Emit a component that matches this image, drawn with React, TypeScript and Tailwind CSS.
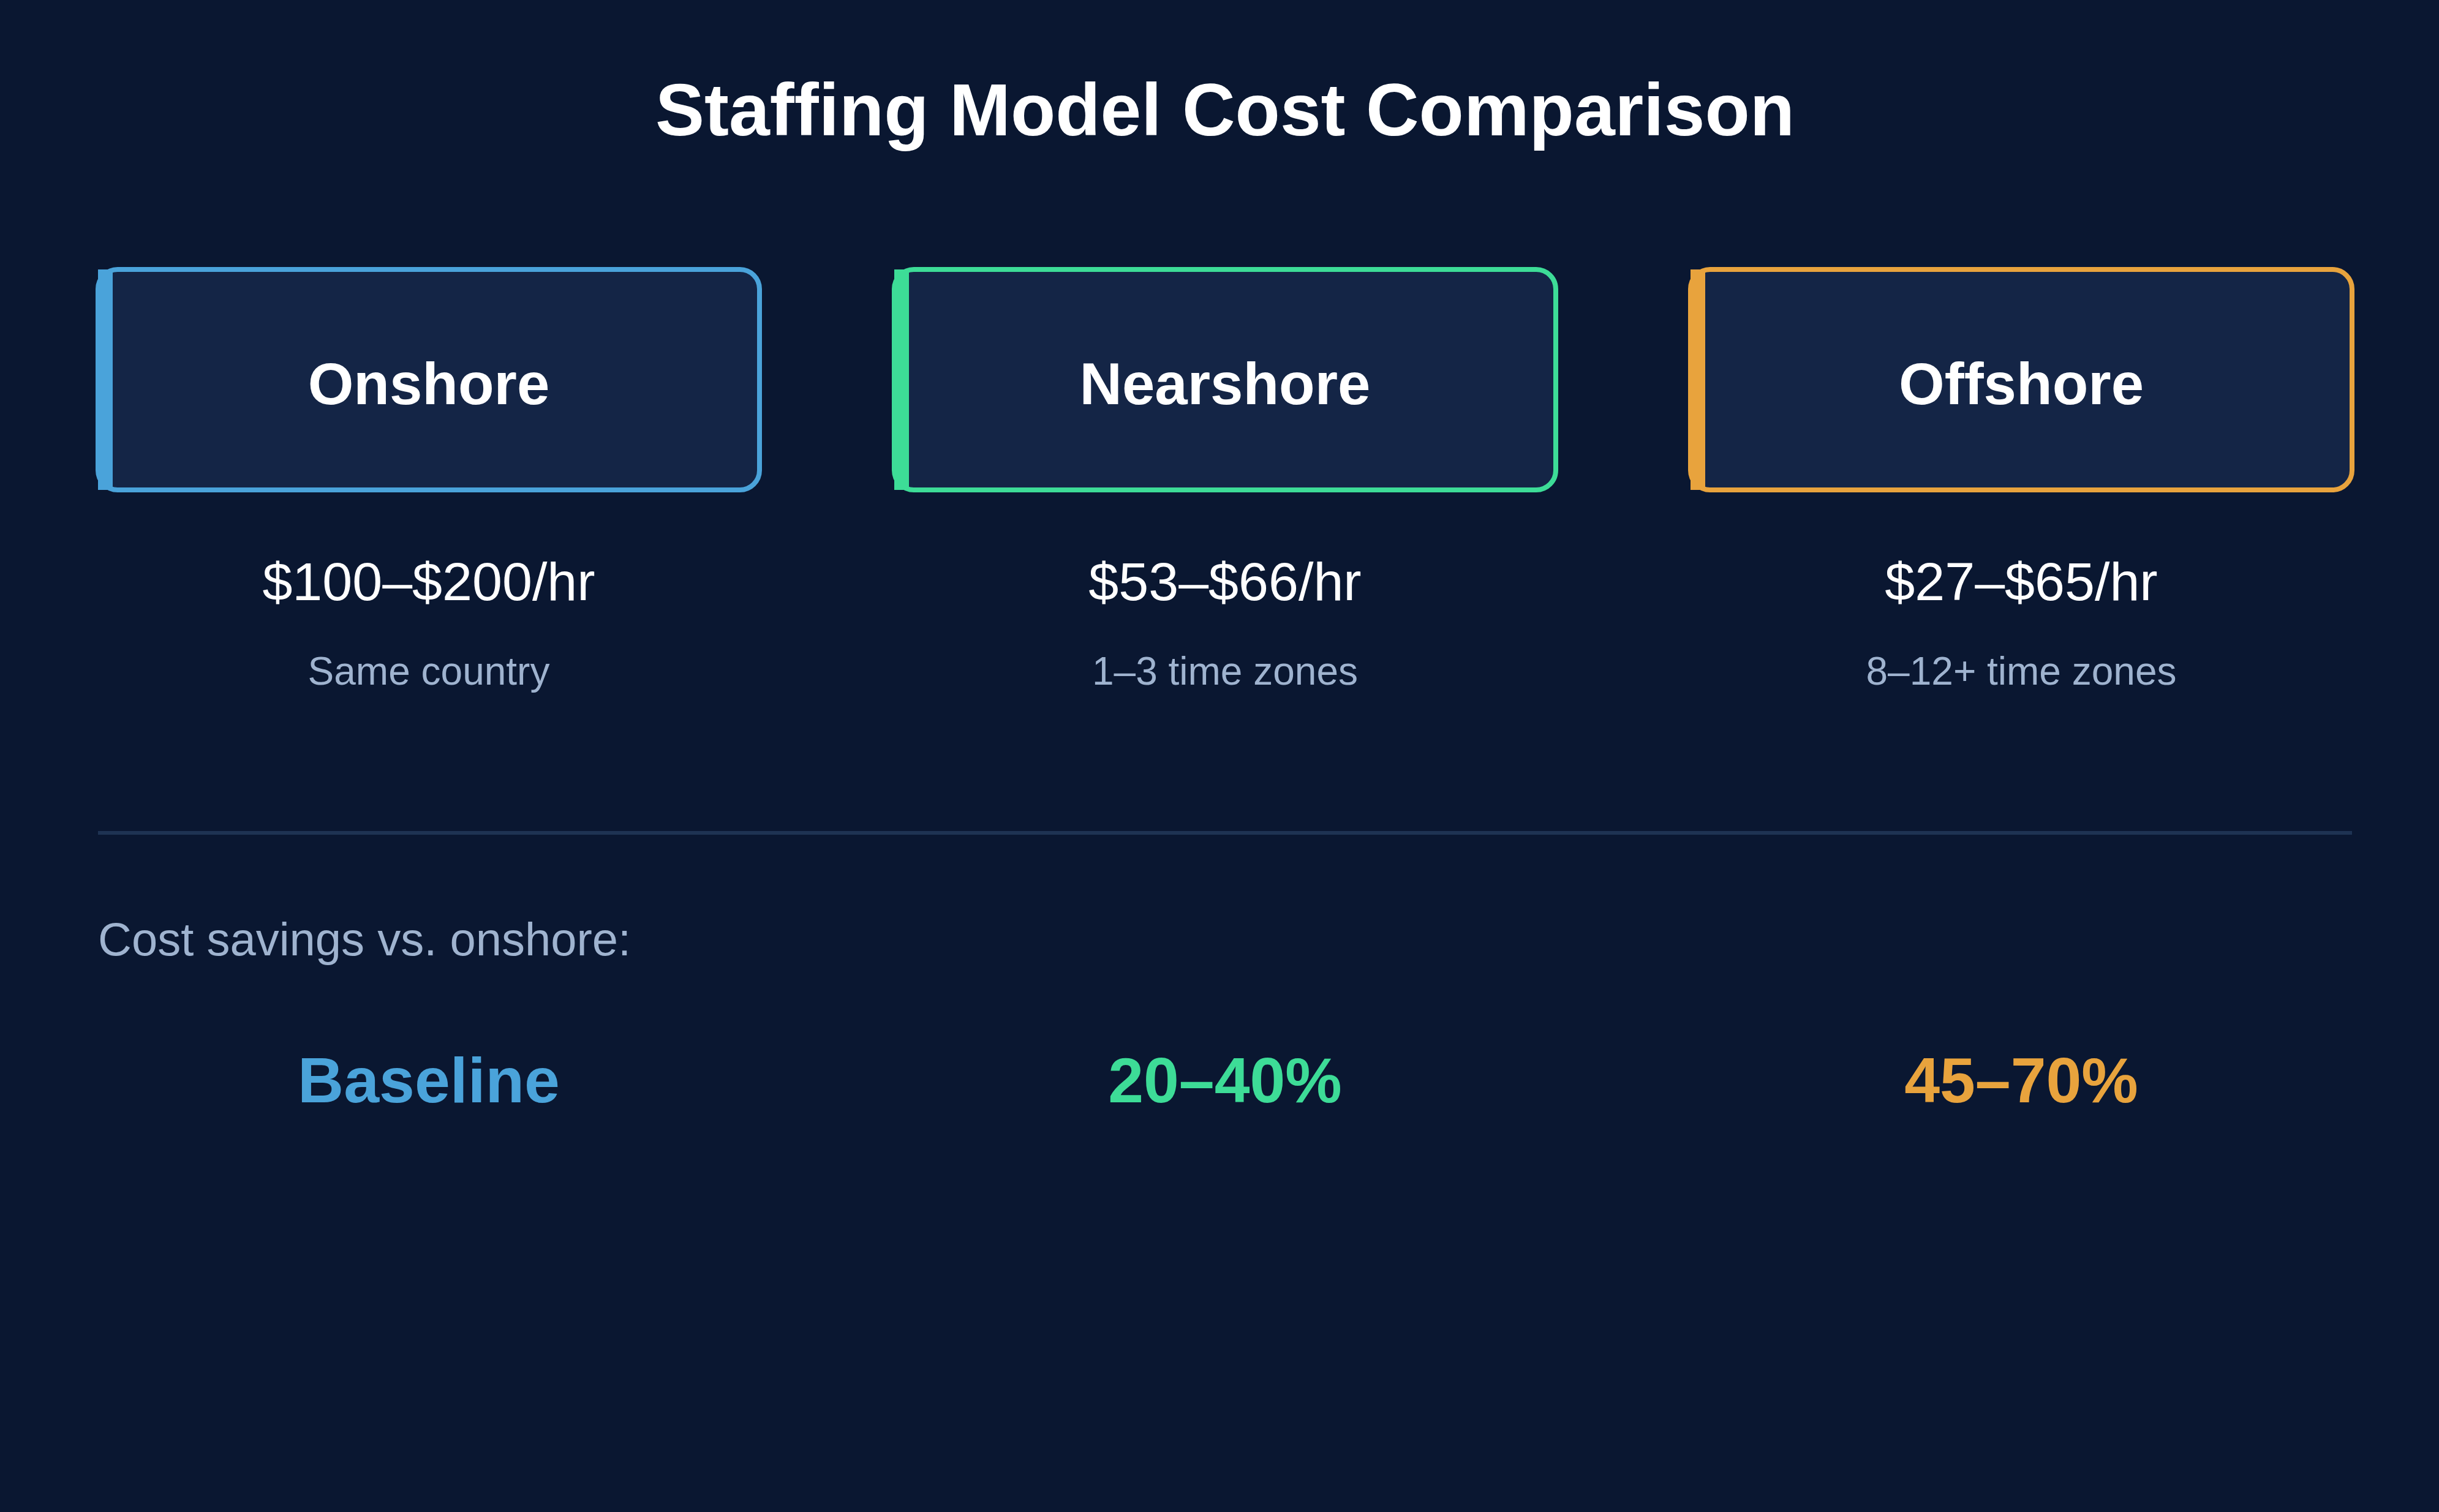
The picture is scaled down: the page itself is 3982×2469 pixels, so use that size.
import React from "react";

const models = [
  {
    name: "Onshore",
    rate: "$100–$200/hr",
    note: "Same country",
    saving: "Baseline",
    border: "border-[#4aa3da]",
    accent: "bg-[#4aa3da]",
    text: "text-[#4aa3da]",
  },
  {
    name: "Nearshore",
    rate: "$53–$66/hr",
    note: "1–3 time zones",
    saving: "20–40%",
    border: "border-[#3ddc97]",
    accent: "bg-[#3ddc97]",
    text: "text-[#3ddc97]",
  },
  {
    name: "Offshore",
    rate: "$27–$65/hr",
    note: "8–12+ time zones",
    saving: "45–70%",
    border: "border-[#e8a33d]",
    accent: "bg-[#e8a33d]",
    text: "text-[#e8a33d]",
  },
];

export default function App() {
  return (
    <div className="min-h-screen w-full bg-[#0a1731] font-['Liberation_Sans',Arial,sans-serif]">
      <div className="ml-[156px] w-[3688px] pt-[119px]">
        <h1 className="text-center text-[120px] font-bold leading-none text-white">
          Staffing Model Cost Comparison
        </h1>

        <div className="mt-[197px] grid grid-cols-3 gap-x-[212px]">
          {models.map((m) => (
            <div key={m.name} className="flex flex-col items-center">
              <div
                className={`relative h-[368px] w-full rounded-[36px] border-[8px] ${m.border} bg-[#142546] pt-[135px] text-center`}
              >
                <span
                  className={`absolute left-[-4px] top-[-4px] h-[360px] w-[24px] ${m.accent}`}
                />
                <div className="text-[96px] font-bold leading-none text-white">
                  {m.name}
                </div>
              </div>
              <div className="mt-[102px] text-[88px] leading-none text-white">
                {m.rate}
              </div>
              <div className="mt-[70px] text-[64px] leading-none text-[#9fb3cf]">
                {m.note}
              </div>
            </div>
          ))}
        </div>

        <div className="mx-[4px] mt-[229px] h-[6px] bg-[#1e3353]" />

        <p className="mt-[133px] pl-[4px] text-[76px] leading-none text-[#9fb3cf]">
          Cost savings vs. onshore:
        </p>

        <div className="mt-[140px] grid grid-cols-3 gap-x-[212px]">
          {models.map((m) => (
            <div
              key={m.name}
              className={`text-center text-[104px] font-bold leading-none ${m.text}`}
            >
              {m.saving}
            </div>
          ))}
        </div>
      </div>
    </div>
  );
}
